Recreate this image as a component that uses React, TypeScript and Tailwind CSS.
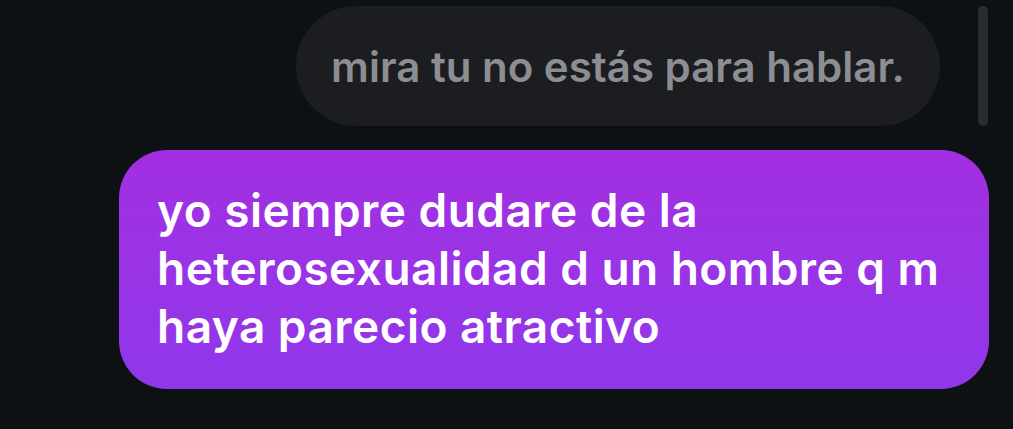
export default function App() {
  return (
    <div
      className="relative w-[1013px] h-[429px] overflow-hidden bg-[#0e1114] pr-6 pt-[6px] flex flex-col items-end gap-6"
      style={{ fontFamily: 'Inter, "Noto Sans", sans-serif' }}
    >
      {/* scroll indicator */}
      <div className="absolute top-[6px] right-[25px] w-[10px] h-[120px] rounded-full bg-[#2a2c30]" />

      <div className="mr-[49px] w-[644px] h-[120px] rounded-full bg-[#1b1d21] flex items-center justify-center">
        <span className="text-[42px] font-semibold text-[#8d8e92]">mira tu no estás para hablar.</span>
      </div>

      <div className="w-[870px] h-[239px] rounded-[48px] bg-gradient-to-b from-[#a22fe1] to-[#9137eb] pl-[38px] pr-6 pt-[31px]">
        <p className="text-[46px] leading-[58px] font-semibold text-white tracking-[0.01em]">
          yo siempre dudare de la
          <br />
          heterosexualidad d un hombre q m
          <br />
          haya parecio atractivo
        </p>
      </div>
    </div>
  );
}
